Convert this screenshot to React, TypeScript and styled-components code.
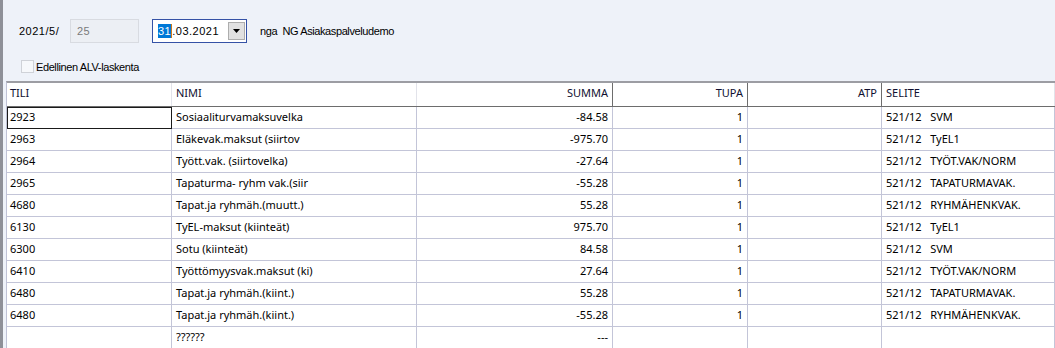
import React from "react";
import styled, { createGlobalStyle } from "styled-components";

const GlobalStyle = createGlobalStyle`
  html, body {
    margin: 0;
    padding: 0;
    background: #eef2f9;
  }
  body {
    overflow: hidden;
  }
`;

const Window = styled.div`
  height: 348px;
  box-sizing: border-box;
  border-left: 3px solid #8e9098;
  background: #eef2f9;
  display: flex;
  flex-direction: column;
  overflow: hidden;
  font-family: "Liberation Sans", Arial, sans-serif;
  color: #000;
`;

const Toolbar = styled.div`
  padding: 19px 0 0 16px;
  display: flex;
  flex-direction: column;
  gap: 17px;
`;

const TopRow = styled.div`
  display: flex;
  align-items: center;
  height: 24px;
`;

const Label = styled.span<{ $wide?: boolean }>`
  font-size: 11px;
  letter-spacing: ${(p) => (p.$wide ? "0.5px" : "-0.4px")};
  white-space: pre;
`;

const PeriodLabel = styled(Label)`
  width: 51px;
`;

const DisabledInput = styled.div`
  box-sizing: border-box;
  width: 69px;
  height: 24px;
  border: 1px solid #d8dbe1;
  background: #eceff4;
  color: #7a7a7a;
  font-size: 11px;
  letter-spacing: 0.5px;
  padding-left: 6px;
  display: flex;
  align-items: center;
`;

const DatePicker = styled.div`
  box-sizing: border-box;
  width: 95px;
  height: 24px;
  margin-left: 13px;
  margin-right: 13px;
  border: 1px solid #3552a6;
  background: #fff;
  display: flex;
  align-items: center;
  padding: 0 1px 0 5px;
  font-size: 11px;
  letter-spacing: 0.5px;
`;

const DateText = styled.div`
  flex: 1;
  display: flex;
  align-items: center;
`;

const Selected = styled.span`
  background: #0078d7;
  color: #fff;
  line-height: 14px;
  padding: 0 0 0 0;
`;

const Caret = styled.span`
  display: inline-block;
  width: 1px;
  height: 14px;
  background: #d07a1a;
`;

const DropButton = styled.div`
  box-sizing: border-box;
  width: 17px;
  height: 18px;
  background: #e1e1e1;
  border: 1px solid #adadad;
  display: flex;
  align-items: center;
  justify-content: center;
`;

const CheckRow = styled.label`
  display: flex;
  align-items: center;
  gap: 2px;
  height: 13px;
  margin-left: 2px;
`;

const CheckBox = styled.span`
  box-sizing: border-box;
  width: 13px;
  height: 13px;
  border: 1px solid #cfd2d8;
  background: #f6f8fb;
`;

const Grid = styled.div`
  margin: 8px 0 0 3px;
  flex: 1;
  border-top: 2px solid #9c9da3;
  border-left: 1px solid #bfc2d6;
  background: #fff;
  font-family: "Segoe UI", "Noto Sans", sans-serif;
  font-size: 11px;
  color: #000;
`;

const Row = styled.div<{ $header?: boolean }>`
  display: grid;
  grid-template-columns: 165px 245px 196px 135px 134px 1fr;
  height: ${(p) => (p.$header ? "23px" : "22px")};
  ${(p) => (p.$header ? "border-bottom: 1px solid #6d6d6d;" : "")}
`;

const Cell = styled.div<{ $right?: boolean; $focus?: boolean; $pad?: number }>`
  box-sizing: border-box;
  border-right: 1px solid #c3c5d8;
  border-bottom: 1px solid #c3c5d8;
  padding: 0 4px 0 ${(p) => p.$pad ?? 4}px;
  line-height: 19px;
  text-align: ${(p) => (p.$right ? "right" : "left")};
  white-space: pre;
  overflow: hidden;
  ${(p) => (p.$focus ? "outline: 1px solid #1a1a1a; outline-offset: -1px;" : "")}
`;

const HeadCell = styled.div<{ $right?: boolean; $dark?: boolean; $pad?: number }>`
  box-sizing: border-box;
  border-right: 1px solid ${(p) => (p.$dark ? "#6d6d6d" : "#e2e3ea")};
  padding: 0 4px 0 ${(p) => p.$pad ?? 4}px;
  line-height: 20px;
  text-align: ${(p) => (p.$right ? "right" : "left")};
  color: #101030;
  white-space: pre;
  overflow: hidden;
`;

type Line = [string, string, string, string, string, string];

const rows: Line[] = [
  ["2923", "Sosiaaliturvamaksuvelka", "-84.58", "1", "", "521/12   SVM"],
  ["2963", "Eläkevak.maksut (siirtov", "-975.70", "1", "", "521/12   TyEL1"],
  ["2964", "Tyött.vak. (siirtovelka)", "-27.64", "1", "", "521/12   TYÖT.VAK/NORM"],
  ["2965", "Tapaturma- ryhm vak.(siir", "-55.28", "1", "", "521/12   TAPATURMAVAK."],
  ["4680", "Tapat.ja ryhmäh.(muutt.)", "55.28", "1", "", "521/12   RYHMÄHENKVAK."],
  ["6130", "TyEL-maksut (kiinteät)", "975.70", "1", "", "521/12   TyEL1"],
  ["6300", "Sotu (kiinteät)", "84.58", "1", "", "521/12   SVM"],
  ["6410", "Työttömyysvak.maksut (ki)", "27.64", "1", "", "521/12   TYÖT.VAK/NORM"],
  ["6480", "Tapat.ja ryhmäh.(kiint.)", "55.28", "1", "", "521/12   TAPATURMAVAK."],
  ["6480", "Tapat.ja ryhmäh.(kiint.)", "-55.28", "1", "", "521/12   RYHMÄHENKVAK."],
  ["", "??????", "---", "", "", ""],
];

export default function App() {
  return (
    <>
      <GlobalStyle />
      <Window>
        <Toolbar>
          <TopRow>
            <PeriodLabel $wide>2021/5/</PeriodLabel>
            <DisabledInput>25</DisabledInput>
            <DatePicker>
              <DateText>
                <Selected>31</Selected>
                <Caret />
                <span>.03.2021</span>
              </DateText>
              <DropButton>
                <svg width="7" height="4" viewBox="0 0 7 4">
                  <path d="M0 0 H7 L3.5 4 Z" fill="#000" />
                </svg>
              </DropButton>
            </DatePicker>
            <Label>nga  NG Asiakaspalveludemo</Label>
          </TopRow>
          <CheckRow>
            <CheckBox />
            <Label>Edellinen ALV-laskenta</Label>
          </CheckRow>
        </Toolbar>

        <Grid>
          <Row $header>
            <HeadCell $pad={3}>TILI</HeadCell>
            <HeadCell>NIMI</HeadCell>
            <HeadCell $right $dark>SUMMA</HeadCell>
            <HeadCell $right $dark>TUPA</HeadCell>
            <HeadCell $right $dark>ATP</HeadCell>
            <HeadCell>SELITE</HeadCell>
          </Row>
          {rows.map((r, i) => (
            <Row key={i}>
              <Cell $pad={3} $focus={i === 0}>{r[0]}</Cell>
              <Cell>{r[1]}</Cell>
              <Cell $right>{r[2]}</Cell>
              <Cell $right>{r[3]}</Cell>
              <Cell $right>{r[4]}</Cell>
              <Cell>{r[5]}</Cell>
            </Row>
          ))}
        </Grid>
      </Window>
    </>
  );
}
